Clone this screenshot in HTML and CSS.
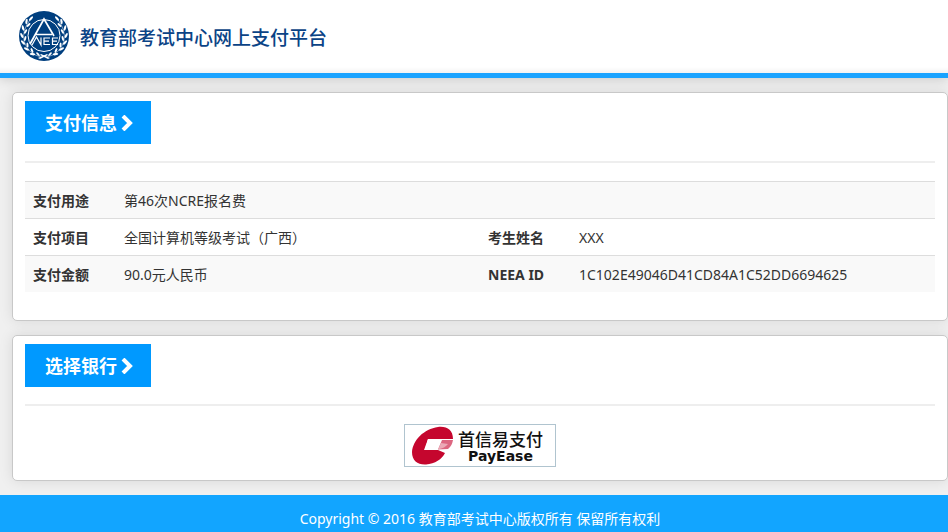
FILE: index.html
```html
<!DOCTYPE html>
<html lang="zh-CN">
<head>
    <meta charset="UTF-8">
    <title>教育部考试中心网上支付平台</title>
    <link rel="stylesheet" href="styles.css">
</head>
<body>
    <header class="header">
        <svg class="logo" viewBox="0 0 50 50" aria-hidden="true">
            <defs>
                <g id="branch" fill="#fff">
                    <path d="M22 46Q9 43 5 30Q3 19 11 9" fill="none" stroke="#fff" stroke-width="0.5"/>
                    <ellipse cx="12" cy="7.5" rx="2.8" ry="1.1" transform="rotate(-48 12 7.5)"/>
                    <ellipse cx="7.5" cy="10.5" rx="2.8" ry="1.1" transform="rotate(-80 7.5 10.5)"/>
                    <ellipse cx="9.5" cy="14" rx="2.6" ry="1" transform="rotate(-45 9.5 14)"/>
                    <ellipse cx="4" cy="17" rx="2.8" ry="1.1" transform="rotate(-105 4 17)"/>
                    <ellipse cx="6.6" cy="20.5" rx="2.6" ry="1" transform="rotate(-60 6.6 20.5)"/>
                    <ellipse cx="2.8" cy="24.5" rx="2.8" ry="1.1" transform="rotate(65 2.8 24.5)"/>
                    <ellipse cx="6.2" cy="27.5" rx="2.6" ry="1" transform="rotate(-75 6.2 27.5)"/>
                    <ellipse cx="4" cy="31.5" rx="2.8" ry="1.1" transform="rotate(48 4 31.5)"/>
                    <ellipse cx="8.5" cy="34" rx="2.6" ry="1" transform="rotate(85 8.5 34)"/>
                    <ellipse cx="7.5" cy="38" rx="2.8" ry="1.1" transform="rotate(25 7.5 38)"/>
                    <ellipse cx="13" cy="39.5" rx="2.6" ry="1" transform="rotate(65 13 39.5)"/>
                    <ellipse cx="13.5" cy="43.2" rx="2.8" ry="1.1" transform="rotate(8 13.5 43.2)"/>
                    <ellipse cx="19" cy="43.2" rx="2.4" ry="0.9" transform="rotate(45 19 43.2)"/>
                    <path d="M19 47L28 43L29 44L21 48Z"/>
                </g>
            </defs>
            <circle cx="25" cy="25" r="25" fill="#003f7f"/>
            <use href="#branch"/>
            <use href="#branch" transform="translate(50 0) scale(-1 1)"/>
            <circle cx="25" cy="24.5" r="16" fill="#003f7f" stroke="#fff" stroke-width="1"/>
            <path d="M11 33L25 8L35 25M17 23.5H33" fill="none" stroke="#fff" stroke-width="1.7"/>
            <path d="M13 34L17.500 26L22 34V26.500M31 27H25V33.500H31M25 30.200H30M39 27H33.500V33.500H39M33.500 30.200H38" fill="none" stroke="#fff" stroke-width="1.2"/>
        </svg>
        <h1 class="site-title">教育部考试中心网上支付平台</h1>
    </header>

    <main class="container">
        <section class="panel panel-info">
            <h2 class="panel-title">支付信息
                <svg class="chevron" viewBox="0 0 12 16" aria-hidden="true"><path d="M2 1L9 8L2 15"/></svg>
            </h2>
            <hr class="divider">
            <table class="table">
                <colgroup>
                    <col class="col-label">
                    <col class="col-value">
                    <col class="col-label">
                    <col class="col-value">
                </colgroup>
                <tr>
                    <th scope="row">支付用途</th>
                    <td colspan="3">第46次NCRE报名费</td>
                </tr>
                <tr>
                    <th scope="row">支付项目</th>
                    <td>全国计算机等级考试（广西）</td>
                    <th scope="row">考生姓名</th>
                    <td>XXX</td>
                </tr>
                <tr>
                    <th scope="row">支付金额</th>
                    <td>90.0元人民币</td>
                    <th scope="row">NEEA ID</th>
                    <td>1C102E49046D41CD84A1C52DD6694625</td>
                </tr>
            </table>
        </section>

        <section class="panel">
            <h2 class="panel-title">选择银行
                <svg class="chevron" viewBox="0 0 12 16" aria-hidden="true"><path d="M2 1L9 8L2 15"/></svg>
            </h2>
            <hr class="divider">
            <div class="bank-list">
                <button type="button" class="bank">
                    <svg class="bank-logo" viewBox="0 0 42 40" aria-hidden="true">
                        <path d="M41 13C41 4 35 0 26 1C12 3 1 14 0 26C0 35 6 39 14 38.500C23 38 30 33 33 27L26 24H13L16 13Z" fill="#c5062e"/>
                        <path d="M16 13H30L26 24H12Z" fill="#fff"/>
                        <path d="M30 14H41Q40 20 36 23L26 23.500Z" fill="#dc6680"/>
                        <path d="M29 17L36 18Q33 22 26 23.500Z" fill="#eba9b6"/>
                    </svg>
                    <span class="bank-name">
                        <span class="bank-cn">首信易支付</span>
                        <span class="bank-en">PayEase</span>
                    </span>
                </button>
            </div>
        </section>
    </main>

    <footer class="footer">Copyright © 2016 教育部考试中心版权所有 保留所有权利</footer>
</body>
</html>
```
FILE: styles.css
```css
* {
    box-sizing: border-box;
}

body {
    margin: 0;
    min-height: 100vh;
    display: flex;
    flex-direction: column;
    font-family: "Noto Sans", "Noto Sans CJK SC", sans-serif;
    font-size: 14px;
    line-height: 20px;
    color: #333;
    background-color: #f0f0f0;
}

.header {
    display: flex;
    align-items: center;
    gap: 11px;
    padding: 11px 19px 12px;
    background: linear-gradient(#fff 92%, #f2f2f2);
    border-bottom: 5px solid #1aa3ff;
    box-shadow: 0 0 12px rgba(0, 0, 0, 0.2);
}

.logo {
    width: 50px;
    height: 50px;
}

.site-title {
    margin: 0;
    padding-top: 4px;
    font-size: 19px;
    font-weight: 500;
    line-height: 28px;
    color: #0b4386;
}

.container {
    padding: 14px 0 14px 12px;
}

.panel {
    padding: 8px 12px 13px;
    background-color: #fff;
    border: 1px solid #c8c8c8;
    border-radius: 5px;
    box-shadow: 0 0 14px rgba(0, 0, 0, 0.1);
}

.panel + .panel {
    margin-top: 14px;
}

.panel-info {
    padding-bottom: 28px;
}

.panel-title {
    display: flex;
    align-items: center;
    gap: 4px;
    width: fit-content;
    height: 43px;
    margin: 0;
    padding: 0 18px 0 20px;
    font-size: 18px;
    font-weight: bold;
    color: #fff;
    background-color: #0099ff;
}

.chevron {
    width: 12px;
    height: 16px;
    fill: none;
    stroke: #fff;
    stroke-width: 4;
}

.divider {
    margin: 17px 0 18px;
    border: none;
    border-top: 2px solid #eee;
}

.table {
    width: 100%;
    table-layout: fixed;
    border-collapse: separate;
    border-spacing: 0;
}

.col-label {
    width: 10%;
}

.col-value {
    width: 40%;
}

.table th,
.table td {
    padding: 9px 8px 7px;
    text-align: left;
    border-top: 1px solid #ddd;
}

.table tr:nth-child(odd) {
    background-color: #f9f9f9;
}

.bank-list {
    display: flex;
    justify-content: center;
}

.bank {
    display: flex;
    align-items: center;
    gap: 4px;
    width: 152px;
    height: 43px;
    padding: 0 7px;
    background-color: #fff;
    border: 1px solid #b0c4cf;
    cursor: pointer;
}

.bank-logo {
    width: 42px;
    height: 40px;
}

.bank-name {
    display: flex;
    flex-direction: column;
    align-items: center;
    color: #111;
    white-space: nowrap;
}

.bank-cn {
    font-family: "Noto Sans CJK SC", sans-serif;
    font-size: 17px;
    font-weight: 500;
    line-height: 20px;
}

.bank-en {
    font-family: "DejaVu Sans", sans-serif;
    font-size: 14px;
    font-weight: bold;
    line-height: 14px;
}

.footer {
    flex: 1;
    padding: 14px 0 0 12px;
    text-align: center;
    color: #fff;
    background-color: #12a5ff;
}
```
